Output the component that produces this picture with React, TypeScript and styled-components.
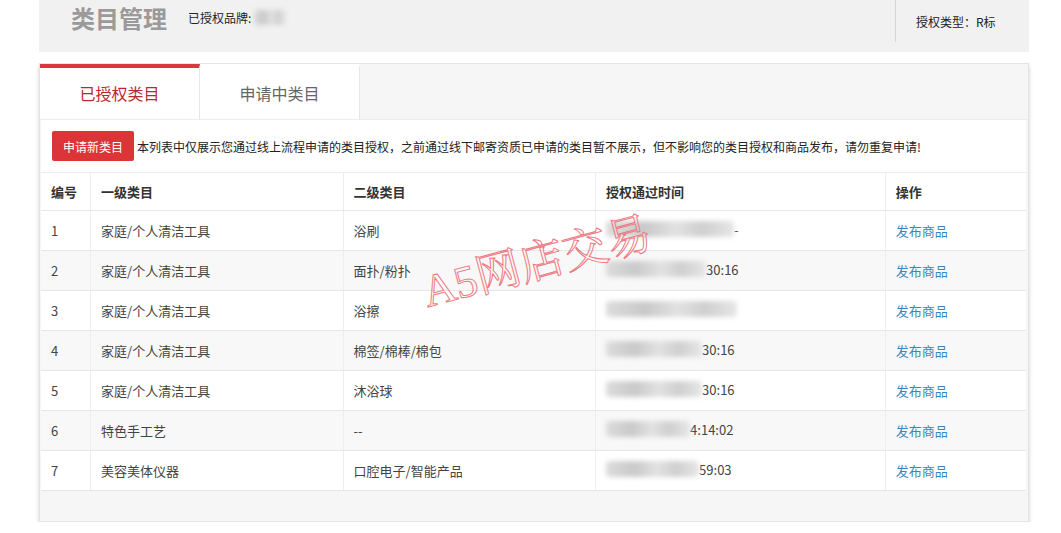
import React from "react";
import styled, { createGlobalStyle } from "styled-components";

const Global = createGlobalStyle`
  html, body { margin: 0; padding: 0; background: #ffffff; }
  body { font-family: "Microsoft YaHei", "Noto Sans CJK SC", "Liberation Sans", sans-serif; color: #333; }
`;

const Page = styled.div`
  width: 990px;
  margin-left: 39px;
`;

const Header = styled.header`
  height: 52px;
  background: #f1f1f1;
  display: flex;
  align-items: flex-start;
`;

const Title = styled.h1`
  margin: 0 0 0 32px;
  height: 38px;
  line-height: 36px;
  font-size: 24px;
  font-weight: 700;
  color: #9a9a9a;
`;

const Brand = styled.div`
  margin-left: 21px;
  height: 34px;
  display: flex;
  align-items: center;
  font-size: 12px;
  color: #222;
  flex: 1;
`;

const Blur = styled.span<{ $w: number; $h?: number }>`
  display: inline-block;
  width: ${(p) => p.$w}px;
  height: ${(p) => p.$h ?? 14}px;
  background: linear-gradient(90deg, #dcdcdc 0%, #c9c9c9 30%, #e2e2e2 55%, #cfcfcf 75%, #e6e6e6 100%);
  filter: blur(2.5px);
  border-radius: 4px;
  vertical-align: middle;
`;

const TypeBox = styled.div`
  width: 113px;
  height: 42px;
  border-left: 1px solid #d6d6d6;
  padding-left: 20px;
  display: flex;
  align-items: center;
  font-size: 12px;
  color: #222;
`;

const Card = styled.section`
  margin-top: 11px;
  border: 1px solid #e3e3e3;
  background: #f6f6f6;
  box-shadow: 0 3px 4px rgba(0, 0, 0, 0.18);
  padding-bottom: 30px;
  position: relative;
`;

const Tabs = styled.div`
  display: flex;
  height: 55px;
  background: #f6f6f6;
  border-bottom: 1px solid #ececec;
`;

const Tab = styled.div<{ $active?: boolean }>`
  width: 160px;
  box-sizing: border-box;
  background: #fff;
  border-top: 4px solid ${(p) => (p.$active ? "#d8393c" : "transparent")};
  border-right: 1px solid #e6e6e6;
  display: flex;
  align-items: center;
  justify-content: center;
  font-size: 16px;
  color: ${(p) => (p.$active ? "#b8282c" : "#666")};
  padding-bottom: 2px;
`;

const Panel = styled.div`
  margin: 0 2px 0 1px;
  background: #fff;
  position: relative;
  overflow: hidden;
`;

const Notice = styled.div`
  height: 52px;
  display: flex;
  align-items: center;
  padding-left: 11px;
  font-size: 12px;
  color: #222;
  border-bottom: 1px solid #ececec;
`;

const RedButton = styled.button`
  height: 30px;
  padding: 0 11px;
  margin-right: 3px;
  border: none;
  border-radius: 2px;
  background: #dc3538;
  color: #fff;
  font-size: 12px;
  font-family: inherit;
`;

const Table = styled.table`
  width: 100%;
  border-collapse: collapse;
  font-size: 13px;
`;

const Th = styled.th<{ $w: number }>`
  width: ${(p) => p.$w}px;
  height: 37px;
  text-align: left;
  font-weight: 700;
  padding: 0 10px;
  color: #333;
  border-left: 1px solid #eeeeee;
  border-bottom: 1px solid #e6e6e6;
  &:first-child { border-left: none; }
`;

const Tr = styled.tr<{ $alt?: boolean }>`
  background: ${(p) => (p.$alt ? "#f8f8f8" : "#fff")};
`;

const Td = styled.td`
  height: 39px;
  padding: 0 10px;
  color: #444;
  border-left: 1px solid #eeeeee;
  border-bottom: 1px solid #e6e6e6;
  &:first-child { border-left: none; }
  white-space: nowrap;
`;

const TimeCell = styled.span`
  display: inline-flex;
  align-items: center;
  color: #444;
`;

const Link = styled.a`
  color: #3a87be;
  text-decoration: none;
`;

const Watermark = styled.div`
  position: absolute;
  left: 389px;
  top: 147px;
  font-family: "Liberation Serif", "Noto Serif CJK SC", "Noto Sans CJK SC", serif;
  font-size: 45px;
  line-height: 50px;
  color: transparent;
  -webkit-text-stroke: 1px #ee7a82;
  transform: rotate(-15deg);
  transform-origin: left bottom;
  pointer-events: none;
  white-space: nowrap;
  letter-spacing: 0;
`;

type Row = { a: string; b: string; blur: number; time: string };

const rows: Row[] = [
  { a: "家庭/个人清洁工具", b: "浴刷", blur: 128, time: "-" },
  { a: "家庭/个人清洁工具", b: "面扑/粉扑", blur: 100, time: "30:16" },
  { a: "家庭/个人清洁工具", b: "浴擦", blur: 131, time: "" },
  { a: "家庭/个人清洁工具", b: "棉签/棉棒/棉包", blur: 96, time: "30:16" },
  { a: "家庭/个人清洁工具", b: "沐浴球", blur: 96, time: "30:16" },
  { a: "特色手工艺", b: "--", blur: 84, time: "4:14:02" },
  { a: "美容美体仪器", b: "口腔电子/智能产品", blur: 93, time: "59:03" },
];

export default function App() {
  return (
    <>
      <Global />
      <Page>
        <Header>
          <Title>类目管理</Title>
          <Brand>
            已授权品牌:&nbsp;<Blur $w={32} $h={15} />
          </Brand>
          <TypeBox>授权类型：R标</TypeBox>
        </Header>
        <Card>
          <Tabs>
            <Tab $active>已授权类目</Tab>
            <Tab>申请中类目</Tab>
          </Tabs>
          <Panel>
            <Notice>
              <RedButton>申请新类目</RedButton>
              本列表中仅展示您通过线上流程申请的类目授权，之前通过线下邮寄资质已申请的类目暂不展示，但不影响您的类目授权和商品发布，请勿重复申请!
            </Notice>
            <Table>
              <thead>
                <tr>
                  <Th $w={29}>编号</Th>
                  <Th $w={231}>一级类目</Th>
                  <Th $w={231}>二级类目</Th>
                  <Th $w={268}>授权通过时间</Th>
                  <Th $w={120}>操作</Th>
                </tr>
              </thead>
              <tbody>
                {rows.map((r, i) => (
                  <Tr key={i} $alt={i % 2 === 1}>
                    <Td>{i + 1}</Td>
                    <Td>{r.a}</Td>
                    <Td>{r.b}</Td>
                    <Td>
                      <TimeCell>
                        <Blur $w={r.blur} $h={16} />
                        {r.time}
                      </TimeCell>
                    </Td>
                    <Td>
                      <Link href="#">发布商品</Link>
                    </Td>
                  </Tr>
                ))}
              </tbody>
            </Table>
            <Watermark>A5网店交易</Watermark>
          </Panel>
        </Card>
      </Page>
    </>
  );
}
